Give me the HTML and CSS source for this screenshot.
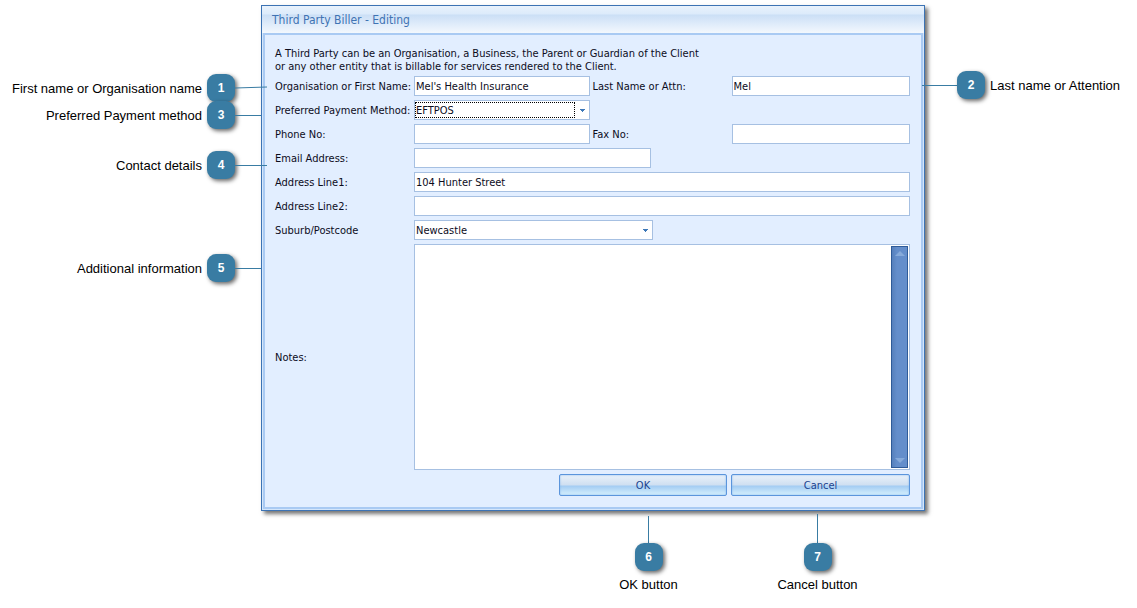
FILE: index.html
```
<!DOCTYPE html>
<html lang="en">
<head>
    <meta charset="UTF-8" />
    <meta name="viewport" content="width=device-width, initial-scale=1.0"/>
    <title>Third Party Biller - Editing</title>
    <link rel="stylesheet" href="styles.css">
</head>
<body>
    <main class="figure">
        <!-- Callouts left of the dialog -->
        <div class="side side-left">
            <div class="callout callout-first">
                <span class="text">First name or Organisation name</span>
                <span class="badge">1</span>
                <svg class="line line-long" viewBox="0 0 32 3"><path d="M0 2L32 1" /></svg>
            </div>
            <div class="callout callout-payment">
                <span class="text">Preferred Payment method</span>
                <span class="badge">3</span>
                <span class="line"></span>
            </div>
            <div class="callout callout-contact">
                <span class="text">Contact details</span>
                <span class="badge">4</span>
                <span class="line line-long"></span>
            </div>
            <div class="callout callout-info">
                <span class="text">Additional information</span>
                <span class="badge">5</span>
                <span class="line"></span>
            </div>
        </div>

        <!-- Dialog -->
        <section class="dialog">
            <h1 class="title">Third Party Biller - Editing</h1>
            <form class="panel">
                <p class="intro">A Third Party can be an Organisation, a Business, the Parent or Guardian of the Client<br>or any other entity that is billable for services rendered to the Client.</p>

                <div class="fields">
                    <label for="first-name">Organisation or First Name:</label>
                    <input type="text" id="first-name" class="field" value="Mel's Health Insurance" />
                    <label for="last-name">Last Name or Attn:</label>
                    <input type="text" id="last-name" class="field field-last" value="Mel" />

                    <label for="payment">Preferred Payment Method:</label>
                    <div class="combo combo-active">
                        <select id="payment">
                            <option>EFTPOS</option>
                        </select>
                        <svg class="arrow" viewBox="0 0 5 3"><path d="M0 0H5V1H4V2H3V3H2V2H1V1H0z" /></svg>
                    </div>

                    <label for="phone" class="row-start">Phone No:</label>
                    <input type="text" id="phone" class="field" />
                    <label for="fax">Fax No:</label>
                    <input type="text" id="fax" class="field field-last" />

                    <label for="email">Email Address:</label>
                    <div class="wide"><input type="text" id="email" class="field field-medium" /></div>

                    <label for="address1">Address Line1:</label>
                    <input type="text" id="address1" class="field wide" value="104 Hunter Street" />

                    <label for="address2">Address Line2:</label>
                    <input type="text" id="address2" class="field wide" />

                    <label for="suburb">Suburb/Postcode</label>
                    <div class="wide">
                        <div class="combo combo-medium">
                            <select id="suburb">
                                <option>Newcastle</option>
                            </select>
                            <svg class="arrow" viewBox="0 0 5 3"><path d="M0 0H5V1H4V2H3V3H2V2H1V1H0z" /></svg>
                        </div>
                    </div>

                    <label for="notes">Notes:</label>
                    <div class="notes wide">
                        <textarea id="notes"></textarea>
                        <div class="scrollbar">
                            <svg viewBox="0 0 10 5"><path d="M5 0L10 5H0z" /></svg>
                            <svg viewBox="0 0 10 5"><path d="M0 0H10L5 5z" /></svg>
                        </div>
                    </div>
                </div>

                <div class="buttons">
                    <button type="button" class="ok">OK</button>
                    <button type="button" class="cancel">Cancel</button>
                </div>
            </form>
        </section>

        <!-- Callout right of the dialog -->
        <div class="side side-right">
            <div class="callout">
                <span class="line"></span>
                <span class="badge">2</span>
                <span class="text">Last name or Attention</span>
            </div>
        </div>

        <!-- Callouts under the buttons -->
        <div class="below">
            <div class="callout-down">
                <span class="stem"></span>
                <span class="badge">6</span>
                <span class="text">OK button</span>
            </div>
            <div class="callout-down">
                <span class="stem stem-long"></span>
                <span class="badge">7</span>
                <span class="text">Cancel button</span>
            </div>
        </div>
    </main>
</body>
</html>
```
FILE: styles.css
```
* {
    box-sizing: border-box;
}

body {
    margin: 0;
    background: #fff;
    color: #000;
    font-family: "Liberation Sans", Arial, sans-serif;
    font-size: 13px;
}

.figure {
    display: grid;
    grid-template-columns: 261px minmax(560px, 1fr) 212px;
    padding-top: 5px;
}

/* Callouts */
.side {
    position: relative;
    z-index: 1;
}

.side-left {
    padding-top: 69px;
}

.side-right {
    padding-top: 66px;
}

.callout {
    display: flex;
    align-items: center;
    height: 28px;
    white-space: nowrap;
}

.side-left .callout {
    justify-content: flex-end;
}

.callout-payment {
    margin-top: -1px;
}

.callout-contact {
    margin-top: 22px;
}

.callout-info {
    margin-top: 75px;
}

.side-left .text {
    margin-right: 5px;
}

.side-right .text {
    margin-left: 5px;
}

.badge {
    flex: none;
    width: 28px;
    height: 28px;
    border-radius: 9px;
    background: #397ca3;
    box-shadow: 2px 2px 4px rgba(0, 0, 0, 0.6);
    color: #fff;
    font-size: 12px;
    font-weight: bold;
    line-height: 28px;
    text-align: center;
}

.line {
    flex: none;
    width: 26px;
    height: 1px;
    background: #397ca3;
}

.line-long {
    width: 32px;
    margin-right: -6px;
}

svg.line {
    height: 3px;
    margin-top: -2px;
    background: none;
    fill: none;
    stroke: #397ca3;
}

.side-right .line {
    width: 35px;
    margin-left: -3px;
}

.below {
    grid-column: 2;
    display: flex;
    justify-content: flex-end;
    align-items: flex-end;
    padding: 3px 23px 0 0;
}

.callout-down {
    display: flex;
    flex-direction: column;
    align-items: center;
    width: 169px;
}

.callout-down .text {
    margin-top: 6px;
    line-height: 15px;
}

.stem {
    width: 1px;
    height: 27px;
    background: #397ca3;
}

.stem-long {
    height: 29px;
}

/* Dialog window */
.dialog {
    padding: 0 1px 1px;
    border: 1px solid #3c73b4;
    background: #d5e6fa;
    box-shadow: 3px 3px 4px rgba(0, 0, 0, 0.55);
    color: #0c0c1c;
    font-family: Tahoma, "DejaVu Sans Condensed", sans-serif;
    font-size: 11px;
}

.title {
    height: 27px;
    margin: 0 -1px;
    padding-left: 10px;
    background: linear-gradient(#e9f2fc 0, #dcebfb 8px, #cbdff6 9px, #f3f8fe 27px);
    color: #3f73b3;
    font-size: 12px;
    font-weight: normal;
    line-height: 28px;
}

.panel {
    padding: 12px 11px 11px 10px;
    border: 2px solid #a9caf3;
    background: #e2eeff;
}

.intro {
    margin: 0 0 3px;
    line-height: 13px;
}

.fields {
    display: grid;
    grid-template-columns: 139px minmax(0, 1fr) 139px minmax(0, 1fr);
    row-gap: 4px;
    align-items: center;
}

.fields label {
    white-space: nowrap;
}

.row-start {
    grid-column: 1;
}

.wide {
    grid-column: 2 / 5;
}

.field,
.combo {
    height: 20px;
    margin: 0 3px 0 0;
    border: 1px solid #a6c0e2;
    border-radius: 0;
    background: #fff;
}

.field {
    min-width: 0;
    padding: 0 1px;
    color: inherit;
    font: inherit;
}

.field-last,
.field.wide {
    margin-right: 0;
}

.field-medium {
    display: block;
    width: 237px;
}

.combo {
    display: flex;
    align-items: center;
}

.combo-medium {
    width: 239px;
}

.combo select {
    flex: 1;
    min-width: 0;
    height: 16px;
    padding: 0 0 0 1px;
    border: 0;
    border-radius: 0;
    appearance: none;
    background: #fff;
    color: inherit;
    font: inherit;
}

.combo-active select {
    border: 1px dotted #000;
    padding-left: 0;
}

.arrow {
    flex: none;
    width: 5px;
    height: 3px;
    margin: 0 4px 0 5px;
    fill: #3d78b8;
    shape-rendering: crispEdges;
}

.notes {
    display: flex;
    padding: 1px;
    border: 1px solid #a6c0e2;
    background: #fff;
}

.notes textarea {
    flex: 1;
    min-width: 0;
    height: 222px;
    padding: 1px;
    border: 0;
    resize: none;
    outline: none;
    color: inherit;
    font: inherit;
}

.scrollbar {
    display: flex;
    flex-direction: column;
    justify-content: space-between;
    align-items: center;
    width: 17px;
    padding: 4px 0;
    border: 1px solid #2f5b98;
    background: linear-gradient(to right, #5680bc, #648ecb 5px);
}

.scrollbar svg {
    width: 10px;
    height: 5px;
    fill: #86aada;
}

.buttons {
    display: flex;
    justify-content: flex-end;
    gap: 4px;
    margin-top: 4px;
}

.buttons button {
    height: 22px;
    padding: 0;
    border: 1px solid #5b95dc;
    border-radius: 2px;
    background: linear-gradient(#eaf2fa, #cfdff1 10px, #a3ccf3 11px, #d6f0fd 20px);
    box-shadow: inset 0 0 2px #7fb2ec;
    color: #1c438f;
    font: inherit;
}

.ok {
    width: 168px;
}

.cancel {
    width: 179px;
}
```
